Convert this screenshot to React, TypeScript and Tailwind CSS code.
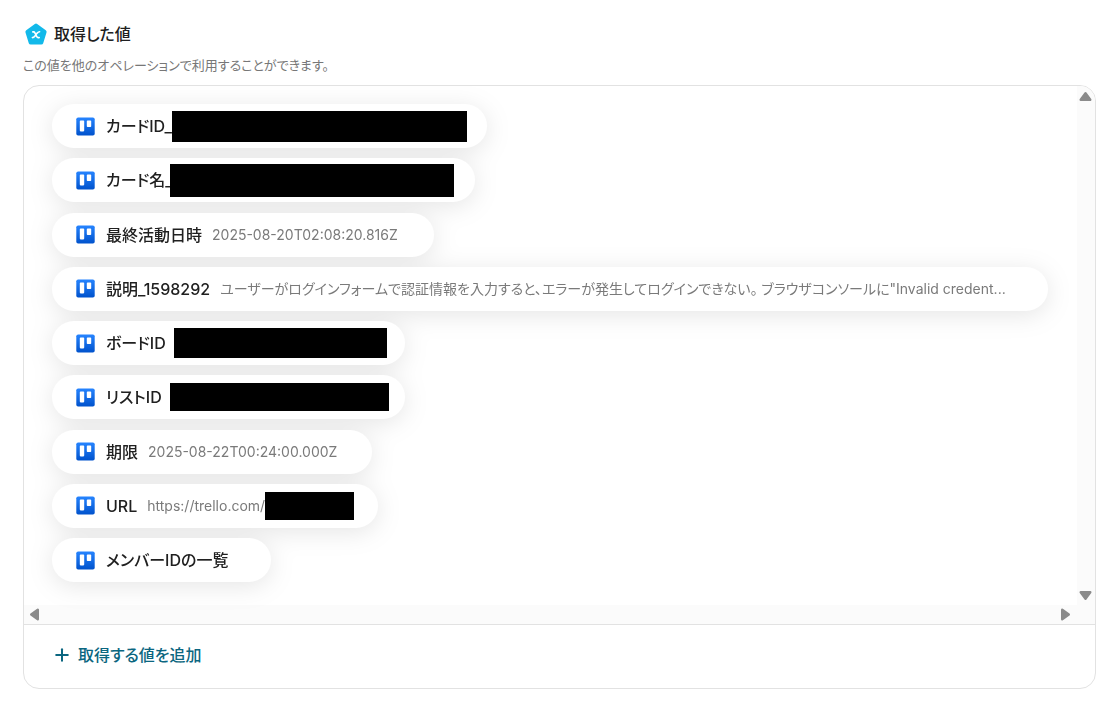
import React from "react";
import { Plus } from "lucide-react";

type Item = {
  label: string;
  value?: string;
  width: string;
  mask?: string;
};

const items: Item[] = [
  { label: "カードID_", width: "w-[435px]", mask: "w-[295px] h-[31px]" },
  { label: "カード名_", width: "w-[423px]", mask: "-ml-[3px] w-[284px] h-[33px]" },
  { label: "最終活動日時", value: "2025-08-20T02:08:20.816Z", width: "w-[382px]" },
  {
    label: "説明_1598292",
    value:
      'ユーザーがログインフォームで認証情報を入力すると、エラーが発生してログインできない。 ブラウザコンソールに"Invalid credent...',
    width: "w-[996px]",
  },
  { label: "ボードID", width: "w-[353px]", mask: "ml-2 w-[213px] h-[30px]" },
  { label: "リストID", width: "w-[353px]", mask: "ml-2 w-[219px] h-7" },
  { label: "期限", value: "2025-08-22T00:24:00.000Z", width: "w-[320px]" },
  { label: "URL", value: "https://trello.com/", width: "w-[326px]", mask: "w-[89px] h-7" },
  { label: "メンバーIDの一覧", width: "w-[219px]" },
];

function VariableIcon() {
  return (
    <svg className="size-6 shrink-0" viewBox="0 0 24 24" aria-hidden="true">
      <path
        d="M12 3.6 L20.6 9.8 L17.3 20.6 H6.7 L3.4 9.8 Z"
        fill="#12b9ea"
        stroke="#12b9ea"
        strokeWidth="4"
        strokeLinejoin="round"
      />
      <path
        d="M8.8 9.9h.8c.7 0 1 .3 1.3.9l1.9 3.9c.3.6.6.9 1.3.9h1.1M15.6 9.8c-1.2 0-1.7.5-2.4 1.3l-2.4 3.1c-.7.9-1.2 1.4-2.4 1.4"
        fill="none"
        stroke="#fff"
        strokeWidth="1.6"
        strokeLinecap="round"
      />
    </svg>
  );
}

function TrelloIcon() {
  return (
    <svg className="size-[19px] shrink-0" viewBox="0 0 19 19" aria-hidden="true">
      <defs>
        <linearGradient id="trello" x1="0" y1="0" x2="0" y2="1">
          <stop offset="0" stopColor="#2684ff" />
          <stop offset="1" stopColor="#0052cc" />
        </linearGradient>
      </defs>
      <rect x="0.3" y="0.5" width="18.4" height="18" rx="1.8" fill="url(#trello)" />
      <rect x="3.8" y="3.6" width="4.4" height="10.8" rx="0.8" fill="#fff" />
      <rect x="10.8" y="3.6" width="4.4" height="6.4" rx="0.8" fill="#fff" />
    </svg>
  );
}

function Arrow({ label, turn }: { label: string; turn?: string }) {
  return (
    <button type="button" aria-label={label} className="flex size-[17px] items-center justify-center">
      <svg className={turn} width="13" height="13" viewBox="0 0 13 13" aria-hidden="true">
        <path
          d="M6.5 3.2 L11.3 9.8 H1.7 Z"
          fill="#8b8b8b"
          stroke="#8b8b8b"
          strokeWidth="2.4"
          strokeLinejoin="round"
        />
      </svg>
    </button>
  );
}

export default function App() {
  return (
    <main className="bg-white pt-5 pr-[11px] pb-3 pl-[23px] font-[Inter,'Noto_Sans_CJK_JP',sans-serif] text-[#202020] [font-feature-settings:'palt']">
      <h1 className="flex h-7 items-center gap-[6px] pl-[1px] text-base font-medium">
        <VariableIcon />
        取得した値
      </h1>
      <p className="mt-[7px] text-[13px] leading-5 text-[#777]">
        この値を他のオペレーションで利用することができます。
      </p>

      <section className="mt-[10px] overflow-hidden rounded-2xl border border-[#e2e2e2]">
        <div className="grid grid-cols-[minmax(0,1fr)_18px]">
          {/* one shadow for the whole stack, so no pill darkens the one above it */}
          <ul className="flex h-[519px] flex-col items-start justify-between overflow-hidden pt-[18px] pr-7 pb-[23px] pl-7 drop-shadow-[0_4px_12px_rgba(0,0,0,0.1)]">
            {items.map((item) => (
              <li
                key={item.label}
                className={`flex h-11 max-w-full items-center rounded-full bg-white pl-6 whitespace-nowrap ${item.width}`}
              >
                <TrelloIcon />
                <span className="ml-[11px] text-base font-medium">{item.label}</span>
                {item.value ? (
                  <span className="ml-[10px] text-sm text-[#7a7a7a]">{item.value}</span>
                ) : null}
                {item.mask ? <span className={`shrink-0 bg-black ${item.mask}`} /> : null}
              </li>
            ))}
          </ul>

          <div className="flex flex-col items-start justify-between bg-[#fbfbfb] pt-[2px] pb-[1px]">
            <Arrow label="上へスクロール" />
            <Arrow label="下へスクロール" turn="rotate-180" />
          </div>
          <div className="flex h-[19px] items-center justify-between bg-[#fbfbfb] pr-[3px] pl-[2px]">
            <Arrow label="左へスクロール" turn="-rotate-90" />
            <Arrow label="右へスクロール" turn="rotate-90" />
          </div>
          <div className="bg-[#fbfbfb]" />
        </div>

        <div className="border-t border-[#e2e2e2] px-7 pt-[14px] pb-[18px]">
          <button type="button" className="flex h-[31px] items-center gap-[6px] text-base font-medium text-[#0b6680]">
            <Plus size={20} strokeWidth={2.4} />
            取得する値を追加
          </button>
        </div>
      </section>
    </main>
  );
}
